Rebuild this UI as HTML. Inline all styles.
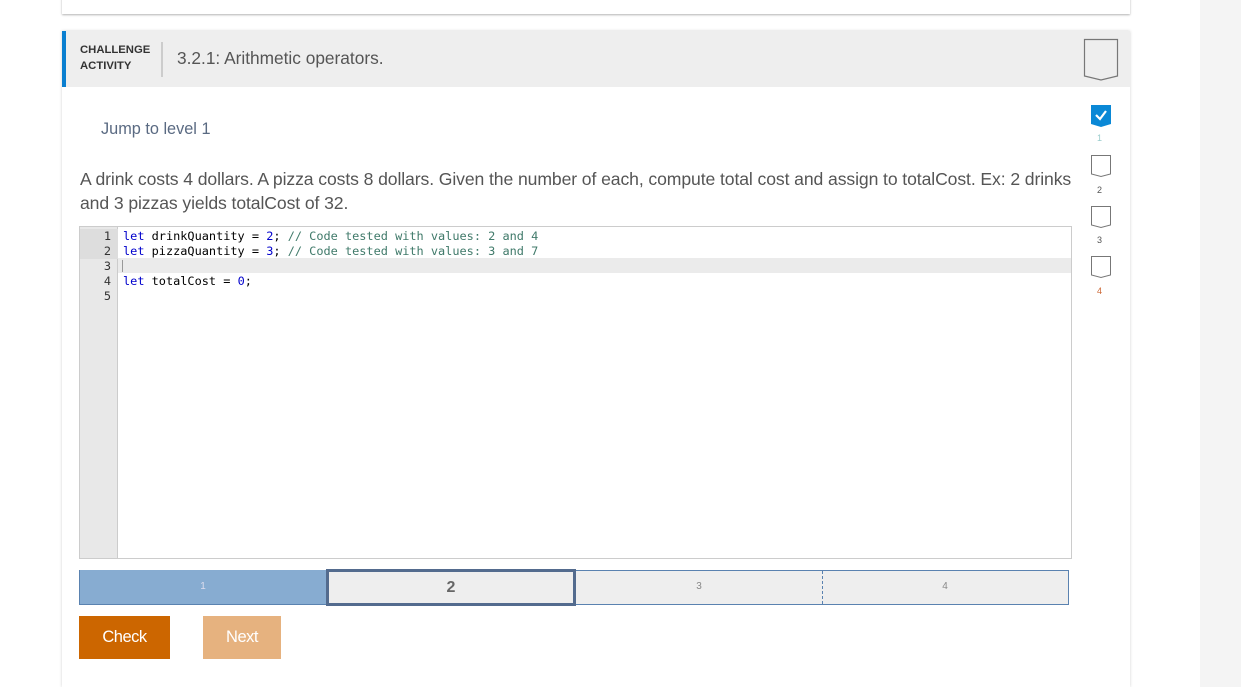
<!DOCTYPE html>
<html><head><style>
html,body{margin:0;width:1241px;height:687px;overflow:hidden}
body{background:#fff;font-family:"Liberation Sans",sans-serif;position:relative}
.abs{position:absolute}
.rightbg{left:1200px;top:0;width:41px;height:687px;background:#f4f4f4}
.topcard{left:62px;top:-5px;width:1068px;height:19px;background:#fff;box-shadow:0 1px 2px rgba(0,0,0,.3)}
.card{left:62px;top:31px;width:1068px;height:656px;background:#fff;box-shadow:0 0 3px rgba(0,0,0,.18)}
.head{left:62px;top:31px;width:1068px;height:56px;background:#eee}
.bluebar{left:62px;top:31px;width:4px;height:56px;background:#0a7fd0}
.ca{left:80px;top:42px;font-size:11.3px;font-weight:bold;color:#333;line-height:16px}
.div{left:161px;top:42px;width:2px;height:35px;background:#ccc}
.title{left:177px;top:48px;font-size:17.3px;color:#555}
.jump{left:101px;top:120px;font-size:16.3px;color:#5a6a82}
.prompt{left:80px;top:167px;font-size:17.6px;color:#555;line-height:24px;white-space:nowrap;letter-spacing:-.1px}
.editor{left:79px;top:226px;width:991px;height:331px;border:1px solid #ccc;background:#fff}
.gutter{left:0;top:0;width:37px;height:331px;background:#e8e8e8;border-right:1px solid #ccc}
.code{font-family:"DejaVu Sans Mono","Liberation Mono",monospace;font-size:11.9px;line-height:15px}
.ln{left:0;width:31px;text-align:right;color:#333}
.kw{color:#00c}.num{color:#00c}.cm{color:#407a6a}
.seg{top:570px;height:34px;text-align:center;line-height:34px;font-size:10px;color:#888}
.btn{top:616px;height:43px;color:#fff;font-size:16.5px;text-align:center;line-height:43px;letter-spacing:-.5px}
</style></head><body>
<div class="abs rightbg"></div>
<div class="abs topcard"></div>
<div class="abs card"></div>
<div class="abs head"></div>
<div class="abs bluebar"></div>
<div class="abs ca">CHALLENGE<br>ACTIVITY</div>
<div class="abs div"></div>
<div class="abs title">3.2.1: Arithmetic operators.</div>
<svg class="abs" style="left:1082px;top:38px" width="38" height="44"><path d="M2.5 1.5H35.5V38L19 42L2.5 38Z" fill="none" stroke="#777" stroke-width="1.2"/></svg>

<div class="abs jump">Jump to level 1</div>
<div class="abs prompt">A drink costs 4 dollars. A pizza costs 8 dollars. Given the number of each, compute total cost and assign to totalCost. Ex: 2 drinks<br>and 3 pizzas yields totalCost of 32.</div>

<div class="abs editor">
 <div class="abs gutter"></div>
 <div class="abs" style="left:0;top:2px;width:38px;height:30px;background:#ddd"></div>
 <div class="abs" style="left:38px;top:31px;width:953px;height:15px;background:#ebebeb"></div>
 <div class="abs" style="left:42px;top:33px;width:1px;height:12px;background:#999"></div>
 <div class="abs code ln" style="top:2px">1<br>2<br>3<br>4<br>5</div>
 <div class="abs code" style="left:43px;top:2px;white-space:pre;color:#000"><span class="kw">let</span> drinkQuantity = <span class="num">2</span>; <span class="cm">// Code tested with values: 2 and 4</span>
<span class="kw">let</span> pizzaQuantity = <span class="num">3</span>; <span class="cm">// Code tested with values: 3 and 7</span>

<span class="kw">let</span> totalCost = <span class="num">0</span>;
</div>
</div>

<div class="abs" style="left:79px;top:570px;width:988px;height:33px;border:1px solid #5a82b0;background:#eee"></div>
<div class="abs seg" style="left:80px;width:246px;background:#87acd1;color:#dde">1</div>
<div class="abs seg" style="left:326px;width:244px;height:31px;line-height:31px;top:569px;border:3px solid #536b8e;background:#eee;font-size:16px;font-weight:bold;color:#666">2</div>
<div class="abs seg" style="left:576px;width:246px">3</div>
<div class="abs" style="left:822px;top:571px;height:33px;border-left:1px dashed #5a82b0"></div>
<div class="abs seg" style="left:822px;width:246px">4</div>

<div class="abs btn" style="left:79px;width:91px;background:#cc6600">Check</div>
<div class="abs btn" style="left:203px;width:78px;background:#e6b27f">Next</div>

<svg class="abs" style="left:1090px;top:104px" width="22" height="24"><path d="M1 1H21V20L11 23L1 20Z" fill="#0a88d6"/><path d="M6 11L10 15L16 7" fill="none" stroke="#fff" stroke-width="2.2"/></svg>
<div class="abs" style="left:1097px;top:133px;font-size:9px;color:#9cc">1</div>
<svg class="abs" style="left:1090px;top:154px" width="22" height="24"><path d="M1.5 1.5H20.5V20L11 22.5L1.5 20Z" fill="none" stroke="#777"/></svg>
<div class="abs" style="left:1097px;top:185px;font-size:9px;color:#555">2</div>
<svg class="abs" style="left:1090px;top:205px" width="22" height="24"><path d="M1.5 1.5H20.5V20L11 22.5L1.5 20Z" fill="none" stroke="#777"/></svg>
<div class="abs" style="left:1097px;top:235px;font-size:9px;color:#555">3</div>
<svg class="abs" style="left:1090px;top:255px" width="22" height="24"><path d="M1.5 1.5H20.5V20L11 22.5L1.5 20Z" fill="none" stroke="#777"/></svg>
<div class="abs" style="left:1097px;top:286px;font-size:9px;color:#c63">4</div>
</body></html>
